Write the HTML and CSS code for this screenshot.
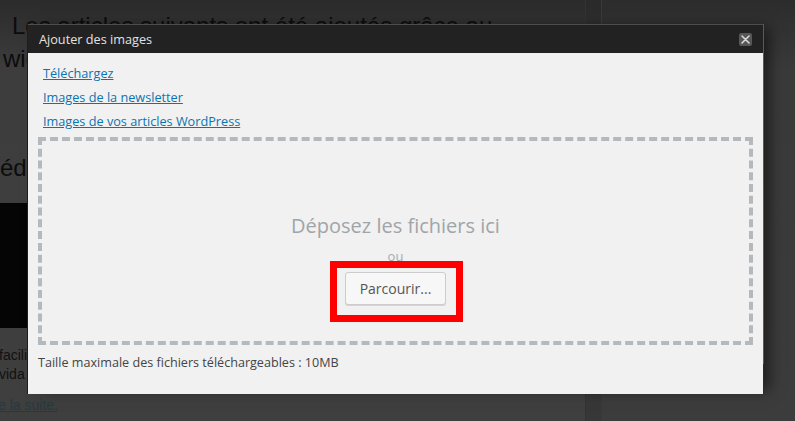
FILE: index.html
```html
<!DOCTYPE html>
<html lang="fr">
<head>
<meta charset="utf-8">
<title>Ajouter des images</title>
<link rel="stylesheet" href="styles.css">
</head>
<body>
<div class="page">
  <main class="content">
    <h1 class="headline">Les articles suivants ont été ajoutés grâce au<br>widget</h1>
    <h2 class="subhead">éd</h2>
    <div class="thumb"></div>
    <p class="excerpt">facilis<br>vida</p>
    <a class="more" href="#">e la suite.</a>
  </main>
  <div class="gutter"></div>
  <aside class="sidebar"></aside>
</div>

<div class="dialog">
  <div class="dialog-head">
    <span class="dialog-title">Ajouter des images</span>
    <button class="dialog-close" aria-label="Fermer">
      <svg width="9" height="9" viewBox="0 0 9 9"><path d="M1 1L8 8M8 1L1 8" stroke="#d8d8d8" stroke-width="1.6" stroke-linecap="round"/></svg>
    </button>
  </div>
  <div class="dialog-body">
    <nav class="sources">
      <a href="#">Téléchargez</a>
      <a href="#">Images de la newsletter</a>
      <a href="#">Images de vos articles WordPress</a>
    </nav>
    <div class="dropzone">
      <p class="drop-title">Déposez les fichiers ici</p>
      <p class="drop-or">ou</p>
      <div class="browse">
        <button class="browse-btn">Parcourir...</button>
        <span class="highlight"></span>
      </div>
    </div>
    <p class="max-size">Taille maximale des fichiers téléchargeables : 10MB</p>
  </div>
</div>
</body>
</html>
```
FILE: styles.css
```css
* { box-sizing: border-box; }
html, body { margin: 0; padding: 0; }
body {
  width: 795px;
  height: 421px;
  overflow: hidden;
  background: #3e3e3e;
  position: relative;
}

.page {
  display: flex;
  height: 421px;
}
.content {
  width: 585px;
  background: linear-gradient(#2b2b2b 0, #3d3d3d 70px, #3f3f3f 100%);
  font-family: "Liberation Sans", Arial, sans-serif;
  color: #0c0c0c;
  overflow: hidden;
}
.gutter {
  width: 17px;
  background: linear-gradient(#2a2a2a 0, #363636 70px, #373737 100%);
  border-left: 1px solid #333;
  border-right: 1px solid #3a3a3a;
}
.sidebar {
  flex: 1;
  background: linear-gradient(#2c2c2c 0, #3a3a3a 70px, #3c3c3c 100%);
}

.headline {
  margin: 9px 0 0 3px;
  text-indent: 9px;
  font-size: 24px;
  line-height: 33px;
  font-weight: normal;
  white-space: nowrap;
}
.subhead {
  margin: 76px 0 0 0;
  font-size: 24px;
  line-height: 33px;
  font-weight: normal;
}
.thumb {
  margin-top: 19px;
  height: 125px;
  width: 300px;
  background: #050505;
}
.excerpt {
  margin: 18px 0 0 -1px;
  font-size: 14px;
  line-height: 19px;
  color: #111;
}
.more {
  display: block;
  margin: 12px 0 0 -2px;
  font-size: 14px;
  line-height: 19px;
  color: #253a40;
  text-decoration: underline;
}

/* dialog (overlay) */
.dialog {
  position: absolute;
  left: 27px;
  top: 24px;
  width: 737px;
  background: #f1f1f1;
  border-left: 1px solid #1d1d1d;
  border-right: 1px solid #2a2a2a;
  box-shadow: 9px 0 14px -4px rgba(0, 0, 0, 0.55);
  font-family: "Open Sans", "Noto Sans", sans-serif;
}
.dialog::after {
  content: "";
  position: absolute;
  right: -1px;
  top: 0;
  width: 1px;
  height: 340px;
  background: #5a5a5a;
}
.dialog-head {
  height: 29px;
  background: #222;
  border-top: 1px solid #4e4e4e;
  display: flex;
  align-items: center;
  justify-content: space-between;
  padding: 0 11px 0 11px;
}
.dialog-title {
  color: #e2e2e2;
  font-size: 12.7px;
  line-height: 28px;
}
.dialog-close {
  width: 13px;
  height: 13px;
  padding: 0;
  margin: 0;
  border: 0;
  border-radius: 2px;
  background: #575757;
  display: flex;
  align-items: center;
  justify-content: center;
}

.dialog-body {
  padding: 8px 10px 22px 10px;
}
.sources {
  display: flex;
  flex-direction: column;
  align-items: flex-start;
  padding-left: 5px;
}
.sources a {
  font-size: 12.7px;
  line-height: 24px;
  color: #0a74b0;
  text-decoration: underline;
}

.dropzone {
  margin-top: 4px;
  height: 208px;
  border: 4px dashed #b4b9be;
  padding-top: 71px;
  display: flex;
  flex-direction: column;
  align-items: center;
}
.drop-title {
  margin: 0;
  font-size: 20px;
  line-height: 28px;
  color: #a0a5aa;
}
.drop-or {
  margin: 7px 0 0;
  font-size: 13px;
  line-height: 18px;
  color: #a6abaf;
}
.browse {
  position: relative;
  margin-top: 7px;
}
.browse-btn {
  display: block;
  height: 33px;
  padding: 0 14px;
  border: 1px solid #cccccc;
  border-radius: 3px;
  background: #f7f7f7;
  box-shadow: 0 1px 0 #d4d4d4;
  color: #555;
  font-family: "Open Sans", "Noto Sans", sans-serif;
  font-size: 14px;
  line-height: 31px;
}
.highlight {
  position: absolute;
  left: -15px;
  right: -17px;
  top: -11px;
  bottom: -17px;
  border: 7px solid #ff0000;
  pointer-events: none;
}

.max-size {
  margin: 9px 0 0;
  font-size: 12.6px;
  line-height: 18px;
  color: #444;
}
```
